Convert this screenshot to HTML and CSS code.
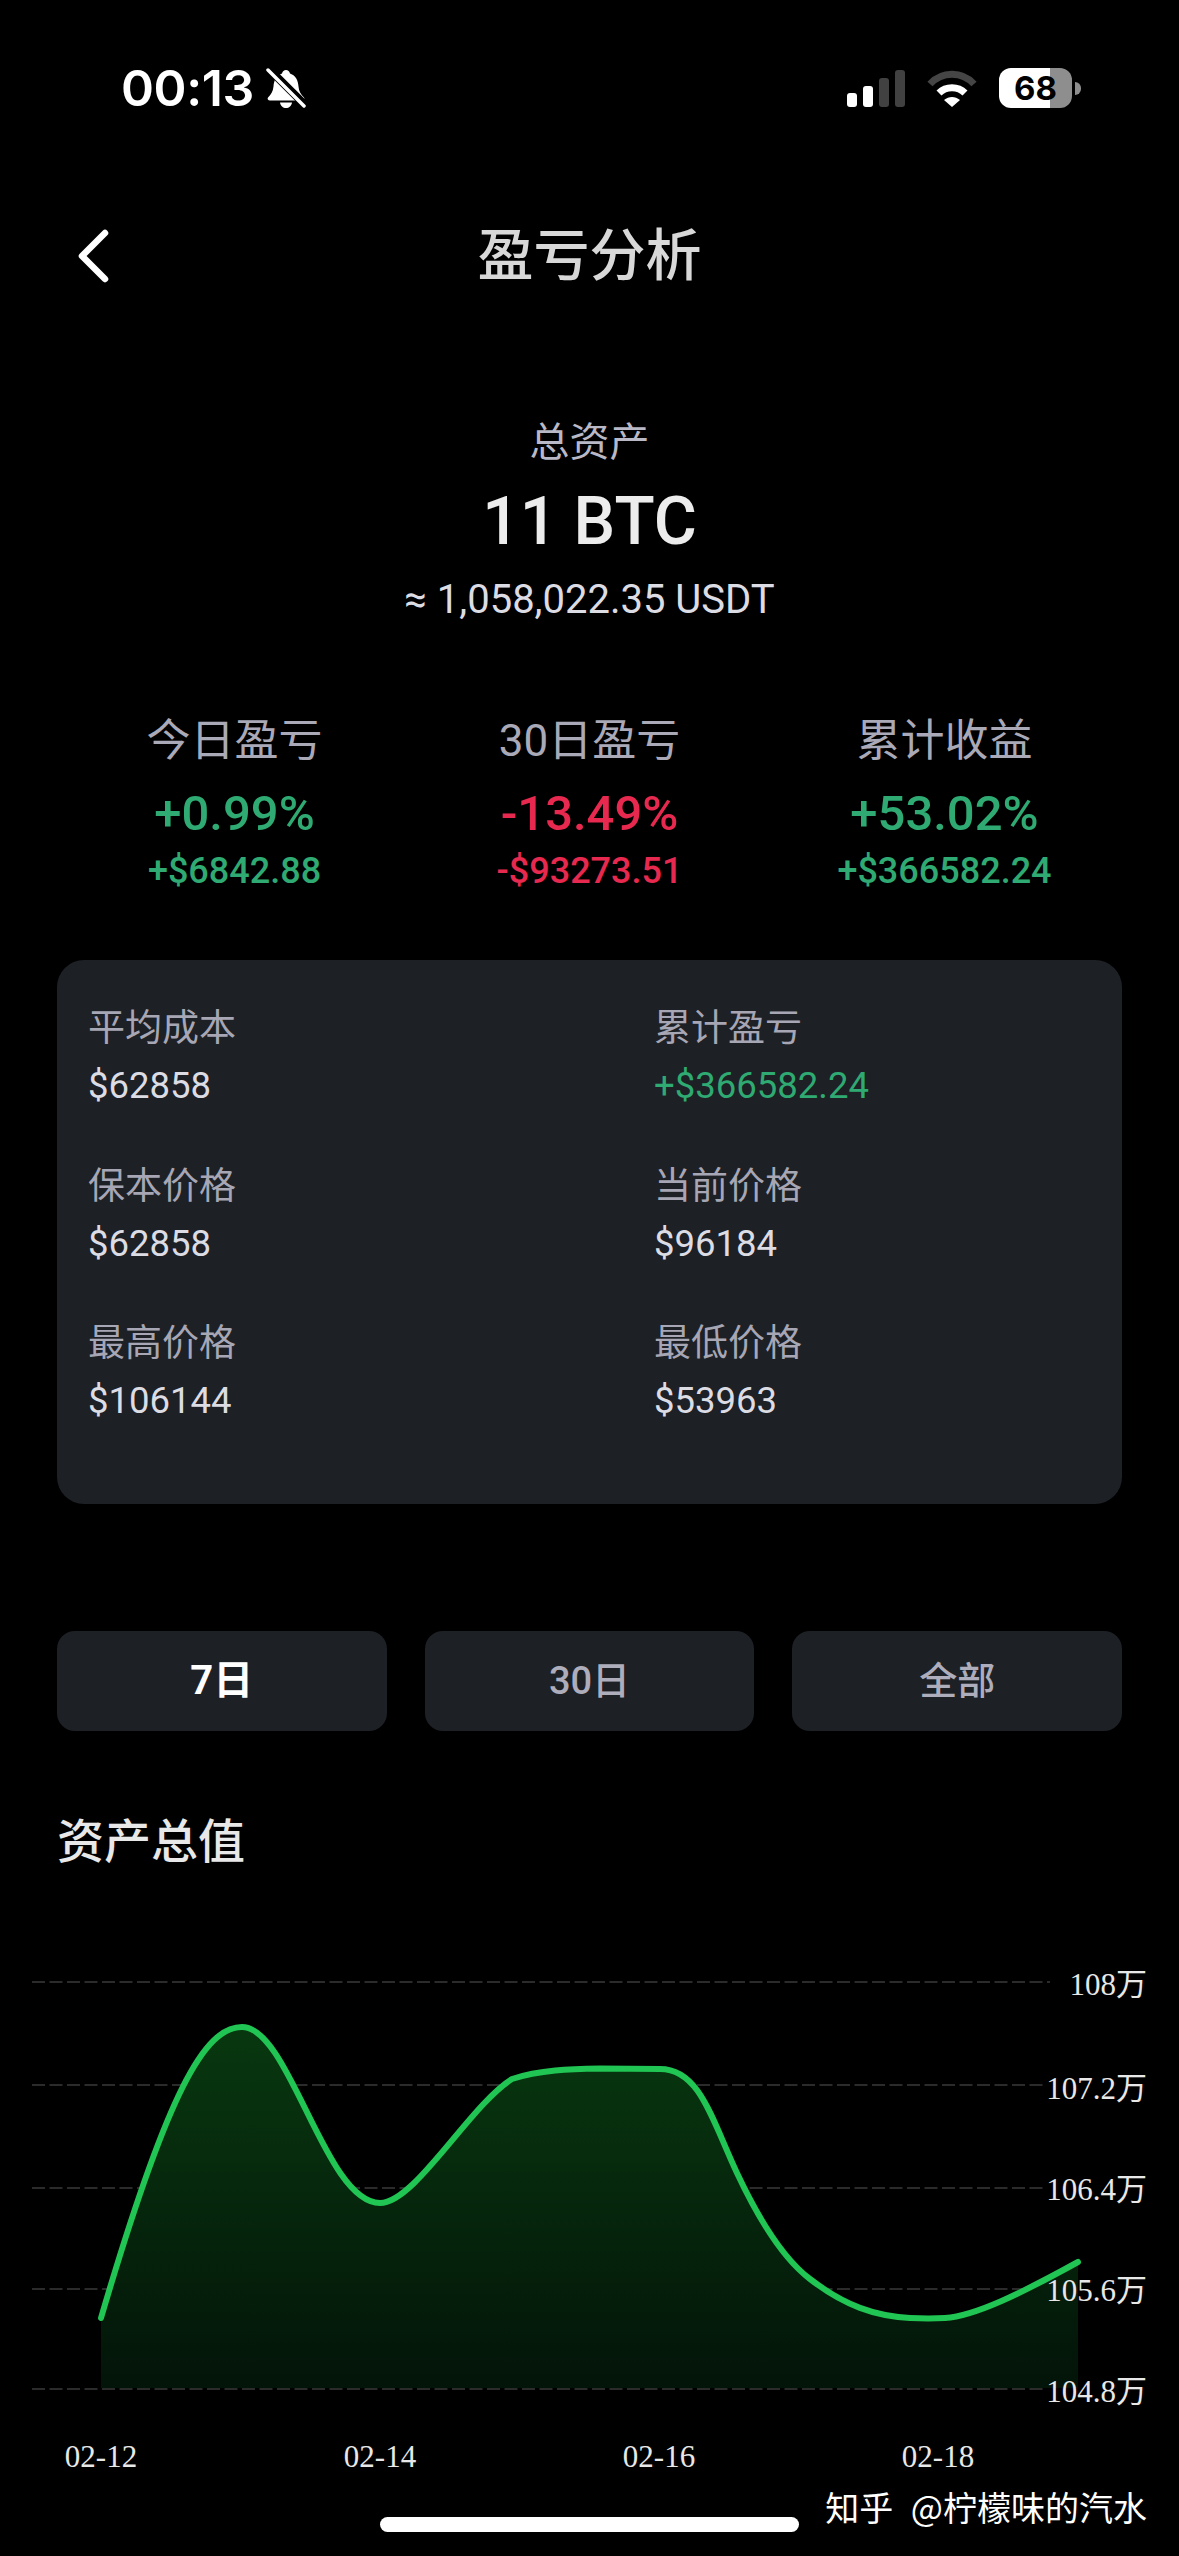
FILE: index.html
```html
<!DOCTYPE html>
<html lang="zh-CN">
<head>
  <meta charset="UTF-8">
  <meta name="viewport" content="width=device-width, initial-scale=1.0">
  <title>盈亏分析</title>
  <link rel="stylesheet" href="styles.css">
</head>
<body>
  <div class="status-bar">
    <div class="status-left">
      <span class="time">00:13</span>
      <svg class="bell" viewBox="0 0 40 42">
        <path d="M20 3c2 0 3.500 1.500 4 3.500 6 2 8 7 8.500 13 .4 5 2.500 8 5.500 11 1 1.500 0 3-2 3H4c-2 0-3-1.500-2-3 3-3 5-6 5.500-11 .5-6 2.500-11 8.500-13 .5-2 2-3.500 4-3.500z" fill="#fff"/>
        <path d="M14 35.500h12c-.5 3.500-3 5.500-6 5.500s-5.500-2-6-5.500z" fill="#fff"/>
        <path d="M1 0l38 38" stroke="#000" stroke-width="8"/>
        <path d="M2 3l36 36" stroke="#fff" stroke-width="3.500" stroke-linecap="round"/>
      </svg>
    </div>
    <div class="status-right">
      <div class="signal">
        <span class="bar h1"></span>
        <span class="bar h2"></span>
        <span class="bar h3 dim"></span>
        <span class="bar h4 dim"></span>
      </div>
      <svg class="wifi" viewBox="0 0 50 37">
        <path d="M3 14C15 1 35 1 47 14" fill="none" stroke="#454545" stroke-width="7"/>
        <path d="M12 23C19 16 31 16 38 23" fill="none" stroke="#fff" stroke-width="7"/>
        <path d="M17 30c5-4 11-4 16 0l-8 7z" fill="#fff"/>
      </svg>
      <div class="battery">
        <div class="battery-body">68</div>
        <div class="battery-nub"></div>
      </div>
    </div>
  </div>

  <div class="nav">
    <svg class="back" viewBox="0 0 34 54">
      <path d="M29 4L6 27l23 23" fill="none" stroke="#fff" stroke-width="6.500" stroke-linecap="round" stroke-linejoin="round"/>
    </svg>
    <h1>盈亏分析</h1>
  </div>

  <div class="resumen">
    <div class="resumen-label">总资产</div>
    <div class="resumen-total">11 BTC</div>
    <div class="resumen-usdt">≈ 1,058,022.35 USDT</div>
  </div>

  <div class="stats">
    <div class="stat">
      <div class="stat-label">今日盈亏</div>
      <div class="stat-pct up">+0.99%</div>
      <div class="stat-amount up">+$6842.88</div>
    </div>
    <div class="stat">
      <div class="stat-label">30日盈亏</div>
      <div class="stat-pct down">-13.49%</div>
      <div class="stat-amount down">-$93273.51</div>
    </div>
    <div class="stat">
      <div class="stat-label">累计收益</div>
      <div class="stat-pct up">+53.02%</div>
      <div class="stat-amount up">+$366582.24</div>
    </div>
  </div>

  <div class="card">
    <div class="item">
      <div class="item-label">平均成本</div>
      <div class="item-value">$62858</div>
    </div>
    <div class="item">
      <div class="item-label">累计盈亏</div>
      <div class="item-value up">+$366582.24</div>
    </div>
    <div class="item">
      <div class="item-label">保本价格</div>
      <div class="item-value">$62858</div>
    </div>
    <div class="item">
      <div class="item-label">当前价格</div>
      <div class="item-value">$96184</div>
    </div>
    <div class="item">
      <div class="item-label">最高价格</div>
      <div class="item-value">$106144</div>
    </div>
    <div class="item">
      <div class="item-label">最低价格</div>
      <div class="item-value">$53963</div>
    </div>
  </div>

  <div class="tabs">
    <div class="tab active">7日</div>
    <div class="tab">30日</div>
    <div class="tab">全部</div>
  </div>

  <h2>资产总值</h2>

  <svg class="chart" viewBox="0 0 1179 530">
    <defs>
      <linearGradient id="relleno" x1="0" y1="0" x2="0" y2="1">
        <stop offset="0" stop-color="#08380f"/>
        <stop offset="1" stop-color="#031409"/>
      </linearGradient>
    </defs>
    <g class="grid">
      <line x1="32" y1="22" x2="1050" y2="22"/>
      <line x1="32" y1="125" x2="1047" y2="125"/>
      <line x1="32" y1="228" x2="1047" y2="228"/>
      <line x1="32" y1="329" x2="1047" y2="329"/>
      <line x1="32" y1="429" x2="1047" y2="429"/>
    </g>
    <path fill="url(#relleno)" d="M101 358C168 130 205 67 242 67C290 67 325 243 380 243C415 243 470 145 512 119C540 110 570 109 600 108.500C620 108.500 640 109 660 109C700 109 712 160 737 213C760 262 785 300 810 319C845 346 875 356 910 358C922 358.500 935 358.500 945 358C975 356 1020 334 1078 302V428H101Z"/>
    <path class="curve" d="M101 358C168 130 205 67 242 67C290 67 325 243 380 243C415 243 470 145 512 119C540 110 570 109 600 108.500C620 108.500 640 109 660 109C700 109 712 160 737 213C760 262 785 300 810 319C845 346 875 356 910 358C922 358.500 935 358.500 945 358C975 356 1020 334 1078 302"/>
    <g class="axis-y">
      <text x="1147" y="35">108万</text>
      <text x="1147" y="139">107.2万</text>
      <text x="1147" y="240">106.4万</text>
      <text x="1147" y="341">105.6万</text>
      <text x="1147" y="442">104.8万</text>
    </g>
    <g class="axis-x">
      <text x="101" y="507">02-12</text>
      <text x="380" y="507">02-14</text>
      <text x="659" y="507">02-16</text>
      <text x="938" y="507">02-18</text>
    </g>
  </svg>

  <div class="marca">知乎 @柠檬味的汽水</div>
  <div class="home-bar"></div>
</body>
</html>
```

FILE: styles.css
```css
* {
  box-sizing: border-box;
}
html, body {
  margin: 0;
  padding: 0;
}
body {
  position: relative;
  width: 1179px;
  height: 2556px;
  overflow: hidden;
  background: #000;
  color: #fff;
  font-family: Roboto, "Noto Sans CJK SC", sans-serif;
}

.status-bar {
  display: flex;
  justify-content: space-between;
  align-items: center;
  height: 56px;
  margin-top: 60px;
  padding: 0 98px 0 121px;
}
.status-left {
  display: flex;
  align-items: center;
  gap: 12px;
}
.time {
  font-family: Inter, sans-serif;
  font-size: 50px;
  font-weight: 600;
  line-height: 56px;
  letter-spacing: -0.4px;
}
.bell {
  width: 40px;
  height: 42px;
}
.status-right {
  display: flex;
  align-items: center;
  gap: 22px;
}
.signal {
  display: flex;
  align-items: flex-end;
  gap: 6px;
  height: 37px;
}
.bar {
  width: 10px;
  background: #fff;
  border-radius: 3px;
}
.bar.dim {
  background: #414141;
}
.h1 { height: 14px; }
.h2 { height: 21px; }
.h3 { height: 29px; }
.h4 { height: 37px; }
.wifi {
  width: 50px;
  height: 37px;
}
.battery {
  display: flex;
  align-items: center;
  gap: 3px;
}
.battery-body {
  width: 73px;
  height: 40px;
  border-radius: 12px;
  background: linear-gradient(to right, #fff 70%, #8e8e8e 70%);
  color: #000;
  font-family: Inter, sans-serif;
  font-size: 33px;
  font-weight: 700;
  line-height: 40px;
  text-align: center;
}
.battery-nub {
  width: 6px;
  height: 13px;
  background: #8e8e8e;
  border-radius: 0 6px 6px 0;
}

.nav {
  position: relative;
  height: 100px;
  margin-top: 90px;
  display: flex;
  align-items: center;
  justify-content: center;
}
.back {
  position: absolute;
  left: 76px;
  top: 23px;
  width: 34px;
  height: 54px;
}
h1 {
  margin: 0;
  font-size: 56px;
  font-weight: 500;
  line-height: 100px;
  color: #d8d8d8;
}

.resumen {
  margin-top: 107px;
  text-align: center;
}
.resumen-label {
  font-size: 40px;
  line-height: 60px;
  color: #b8b8c6;
}
.resumen-total {
  margin-top: 9px;
  font-size: 66px;
  font-weight: 500;
  line-height: 80px;
  color: #ececec;
}
.resumen-usdt {
  margin-top: 13px;
  font-size: 40px;
  line-height: 50px;
  color: #dcdce4;
}

.stats {
  display: grid;
  grid-template-columns: repeat(3, 1fr);
  margin-top: 86px;
  padding: 0 57px;
  text-align: center;
}
.stat-label {
  font-size: 44px;
  line-height: 60px;
  color: #a9a9b8;
}
.stat-pct {
  margin-top: 13px;
  font-size: 49px;
  font-weight: 500;
  line-height: 60px;
}
.stat-amount {
  margin-top: 2px;
  font-size: 36px;
  font-weight: 500;
  line-height: 50px;
}
.up {
  color: #2eaa72;
}
.down {
  color: #e8294f;
}

.card {
  display: grid;
  grid-template-columns: 566px 1fr;
  row-gap: 50.5px;
  align-content: start;
  height: 544px;
  margin: 64px 57px 0;
  padding: 44px 31px 0;
  background: #1d2025;
  border-radius: 27px;
}
.item-label {
  font-size: 37px;
  line-height: 50px;
  color: #a6a6b4;
}
.item-value {
  margin-top: 7px;
  font-size: 36.5px;
  line-height: 50px;
  color: #dcdce4;
}
.item-value.up {
  color: #2eaa72;
}

.tabs {
  display: flex;
  gap: 38px;
  margin: 127px 57px 0;
}
.tab {
  flex: 1;
  height: 100px;
  background: #1d2025;
  border-radius: 18px;
  font-size: 38px;
  font-weight: 500;
  line-height: 100px;
  text-align: center;
  color: #adadbb;
}
.tab.active {
  color: #fff;
  font-size: 40px;
  font-weight: 700;
}

h2 {
  margin: 81px 0 0 57px;
  font-size: 47px;
  font-weight: 500;
  line-height: 60px;
  color: #e8e8e8;
}

.chart {
  display: block;
  width: 1179px;
  height: 530px;
  margin-top: 88px;
}
.grid line {
  stroke: #2b2b2b;
  stroke-width: 2;
  stroke-dasharray: 13 4.500;
}
.curve {
  fill: none;
  stroke: #20c553;
  stroke-width: 6;
  stroke-linecap: round;
}
.axis-y text, .axis-x text {
  font-family: "Liberation Serif", "Noto Sans CJK SC", serif;
  font-size: 31px;
  fill: #e8e8e8;
}
.axis-y text {
  text-anchor: end;
}
.axis-x text {
  text-anchor: middle;
}

.marca {
  position: absolute;
  right: 32px;
  top: 2483px;
  font-family: "Noto Sans CJK SC", sans-serif;
  font-size: 34px;
  line-height: 48px;
  word-spacing: 10px;
  color: #fff;
}
.home-bar {
  position: absolute;
  left: 380px;
  top: 2517px;
  width: 419px;
  height: 15px;
  background: #fff;
  border-radius: 8px;
}
```
